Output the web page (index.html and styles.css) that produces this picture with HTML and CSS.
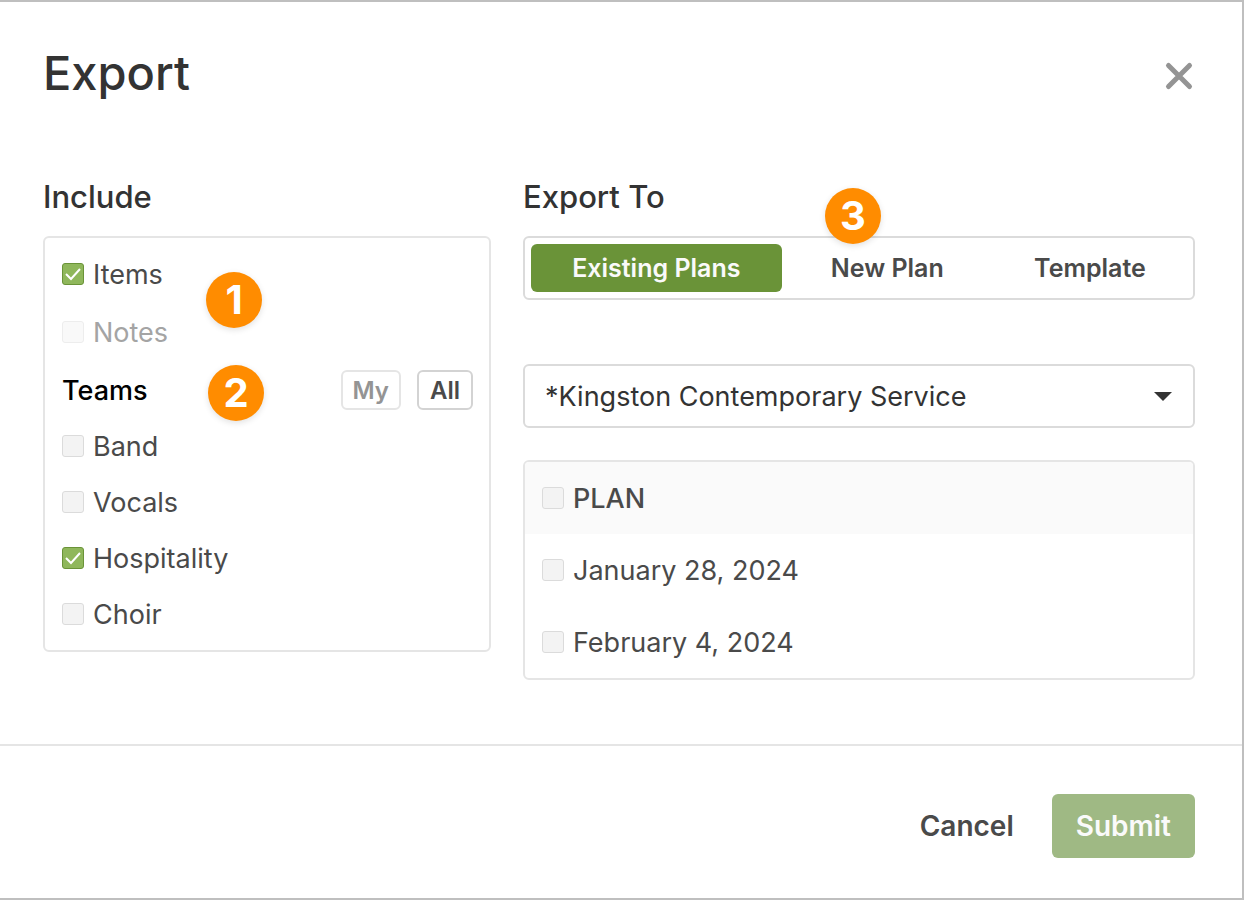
FILE: index.html
```html
<!DOCTYPE html>
<html lang="en">
<head>
    <meta charset="UTF-8">
    <meta name="viewport" content="width=device-width, initial-scale=1.0">
    <title>Export</title>
    <link rel="stylesheet" href="styles.css">
</head>
<body>

    <div class="modal">
        <header class="modal-header">
            <h1>Export</h1>
            <button type="button" class="close-button" aria-label="Close">
                <svg width="32" height="32" viewBox="0 0 32 32" fill="none" stroke="#949494" stroke-width="5" stroke-linecap="round">
                    <path d="M5.500 5.500L26.500 26.500M26.500 5.500L5.500 26.500"/>
                </svg>
            </button>
        </header>

        <main class="modal-body">
            <section class="include">
                <h2>Include</h2>
                <div class="panel">
                    <label class="option"><input type="checkbox" class="checkbox" checked>Items</label>
                    <label class="option disabled"><input type="checkbox" class="checkbox" disabled>Notes</label>
                    <div class="teams">
                        <div class="teams-row">
                            <h3>Teams</h3>
                            <button type="button" class="small-button muted">My</button>
                            <button type="button" class="small-button">All</button>
                        </div>
                        <label class="option"><input type="checkbox" class="checkbox">Band</label>
                        <label class="option"><input type="checkbox" class="checkbox">Vocals</label>
                        <label class="option"><input type="checkbox" class="checkbox" checked>Hospitality</label>
                        <label class="option"><input type="checkbox" class="checkbox">Choir</label>
                    </div>
                    <span class="badge badge-one">1</span>
                    <span class="badge badge-two">2</span>
                </div>
            </section>

            <section class="export-to">
                <h2>Export To</h2>
                <div class="tabs">
                    <button type="button" class="tab active">Existing Plans</button>
                    <button type="button" class="tab">New Plan</button>
                    <button type="button" class="tab">Template</button>
                    <span class="badge badge-three">3</span>
                </div>

                <select class="service-select" aria-label="Service type">
                    <option>*Kingston Contemporary Service</option>
                </select>

                <table class="plans">
                    <thead>
                        <tr>
                            <th><label class="plan"><input type="checkbox" class="checkbox">PLAN</label></th>
                        </tr>
                    </thead>
                    <tbody>
                        <tr>
                            <td><label class="plan"><input type="checkbox" class="checkbox">January 28, 2024</label></td>
                        </tr>
                        <tr>
                            <td><label class="plan"><input type="checkbox" class="checkbox">February 4, 2024</label></td>
                        </tr>
                    </tbody>
                </table>
            </section>
        </main>

        <footer class="modal-footer">
            <button type="button" class="cancel-button">Cancel</button>
            <button type="submit" class="submit-button" disabled>Submit</button>
        </footer>
    </div>

</body>
</html>
```
FILE: styles.css
```css
* {
    box-sizing: border-box;
}

body {
    margin: 0;
    font-family: Inter, "Liberation Sans", sans-serif;
    font-size: 27px;
    line-height: 41px;
    color: #4a4a4a;
    background: #fff;
}

h1, h2, h3 {
    margin: 0;
    font-weight: 500;
    color: #333;
}

button, select {
    font-family: inherit;
    color: inherit;
    cursor: pointer;
}

.modal {
    display: flex;
    flex-direction: column;
    min-height: 100vh;
    border: 2px solid #bfbfbf;
    border-left: none;
}

/* Header */
.modal-header {
    display: flex;
    justify-content: space-between;
    padding: 43px 47px 0 43px;
}

.modal-header h1 {
    font-size: 47px;
    line-height: 56px;
}

.close-button {
    display: flex;
    align-items: center;
    align-self: flex-end;
    height: 50px;
    padding: 0;
    border: none;
    background: none;
}

/* Body */
.modal-body {
    display: grid;
    grid-template-columns: 2fr 3fr;
    gap: 32px;
    flex: 1;
    align-items: start;
    padding: 76px 47px 64px 43px;
}

.modal-body h2 {
    margin-bottom: 19px;
    font-size: 31px;
    line-height: 40px;
}

.panel {
    position: relative;
    padding: 8px 16px 8px 17px;
    border: 2px solid #e5e5e5;
    border-radius: 6px;
    display: flex;
    flex-direction: column;
    gap: 2px;
}

.option {
    display: flex;
    align-items: center;
    gap: 9px;
    height: 56px;
}

.option.disabled {
    color: #a4a4a4;
}

.checkbox {
    appearance: none;
    flex: none;
    width: 22px;
    height: 22px;
    margin: 0;
    border: 1px solid #dbdbdb;
    border-radius: 3px;
    background: #f3f3f3;
}

.checkbox:checked {
    border-color: #6a9338;
    background: #8fb75b url("data:image/svg+xml,%3Csvg xmlns='http://www.w3.org/2000/svg' viewBox='0 0 22 22' fill='none' stroke='white' stroke-width='2'%3E%3Cpath d='M4 11L9 16L18 6'/%3E%3C/svg%3E") center / 22px 22px no-repeat border-box;
}

.checkbox:disabled {
    border-color: #ededed;
    background: #f9f9f9;
}

.teams-row {
    display: flex;
    align-items: center;
    gap: 16px;
    height: 56px;
}

.teams-row h3 {
    margin-right: auto;
    font-size: 27px;
    color: #000;
}

.small-button {
    min-width: 56px;
    height: 40px;
    padding: 0 10px;
    border: 2px solid #d3d3d3;
    border-radius: 6px;
    background: #fff;
    font-size: 24px;
    font-weight: 600;
}

.small-button.muted {
    border-color: #e5e5e5;
    color: #949494;
}

/* Numbered badges */
.badge {
    position: absolute;
    width: 56px;
    height: 56px;
    border-radius: 50%;
    background: #ff8c00;
    box-shadow: 0 2px 6px rgba(0, 0, 0, 0.12);
    color: #fff;
    font-size: 40px;
    font-weight: 700;
    line-height: 56px;
    text-align: center;
}

.badge-one {
    top: 34px;
    left: 161px;
}

.badge-two {
    top: 127px;
    left: 163px;
}

.badge-three {
    top: -50px;
    left: 300px;
}

/* Export To */
.tabs {
    position: relative;
    display: flex;
    gap: 8px;
    padding: 6px;
    border: 2px solid #dbdbdb;
    border-radius: 6px;
}

.tab {
    flex: 1 1 auto;
    height: 48px;
    padding: 0;
    border: none;
    border-radius: 6px;
    background: none;
    font-size: 25px;
    font-weight: 600;
}

.tab.active {
    background: #6a9338;
    color: #fafafa;
}

.service-select {
    appearance: none;
    display: block;
    width: 100%;
    height: 64px;
    margin: 64px 0 32px;
    padding: 0 60px 0 20px;
    border: 2px solid #dbdbdb;
    border-radius: 6px;
    background: #fff url("data:image/svg+xml,%3Csvg xmlns='http://www.w3.org/2000/svg' width='18' height='9' viewBox='0 0 18 9'%3E%3Cpath d='M0 0H18L9 9Z' fill='%23333'/%3E%3C/svg%3E") right 21px center no-repeat;
    color: #333;
    font-size: 27px;
}

.plans {
    width: 100%;
    border: 2px solid #e5e5e5;
    border-radius: 6px;
    border-spacing: 0;
    overflow: hidden;
}

.plans th, .plans td {
    padding: 0 17px;
    text-align: left;
}

.plans th {
    background: #fafafa;
    font-weight: 500;
}

.plan {
    display: flex;
    align-items: center;
    gap: 9px;
    height: 72px;
}

/* Footer */
.modal-footer {
    display: flex;
    justify-content: flex-end;
    gap: 16px;
    padding: 48px 47px 40px;
    border-top: 2px solid #e5e5e5;
}

.cancel-button, .submit-button {
    height: 64px;
    padding: 0 22px;
    border: none;
    border-radius: 6px;
    background: none;
    font-size: 28px;
    font-weight: 600;
}

.submit-button {
    padding: 0 24px;
    background: #9fb984;
    color: #fafafa;
}
```
